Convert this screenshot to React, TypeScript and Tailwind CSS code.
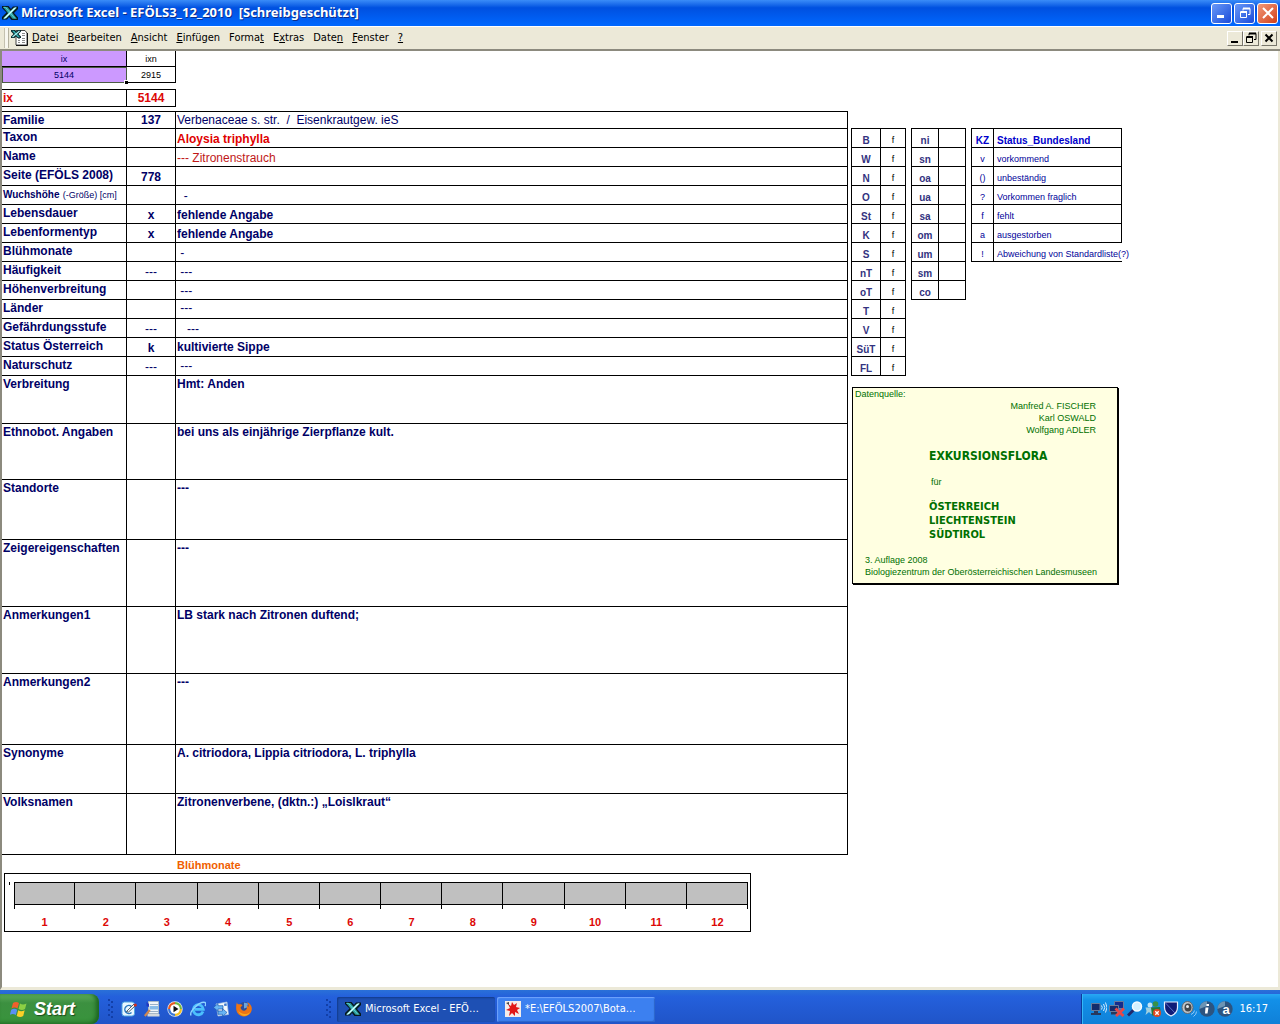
import React from 'react';

interface RecordRow {
  label: React.ReactNode;
  code?: string;
  value?: string;
  height: string;
  valueClass?: string;
}

const MENU = [
  ['', 'D', 'atei'],
  ['', 'B', 'earbeiten'],
  ['', 'A', 'nsicht'],
  ['', 'E', 'infügen'],
  ['Forma', 't', ''],
  ['E', 'x', 'tras'],
  ['Date', 'n', ''],
  ['', 'F', 'enster'],
  ['', '?', ''],
];

const ROWS: RecordRow[] = [
  { label: 'Familie', code: '137', value: 'Verbenaceae s. str.  /  Eisenkrautgew. ieS', height: 'h-[17px]', valueClass: 'align-bottom' },
  { label: 'Taxon', value: 'Aloysia triphylla', height: 'h-[19px]', valueClass: 'align-bottom font-bold text-[#e00000]' },
  { label: 'Name', value: '--- Zitronenstrauch', height: 'h-[19px]', valueClass: 'align-bottom text-[#c01818]' },
  { label: 'Seite (EFÖLS 2008)', code: '778', height: 'h-[19px]' },
  {
    label: (
      <>
        <span className="text-[10px]">Wuchshöhe</span> <span className="text-[9px] font-normal">(-Größe) [cm]</span>
      </>
    ),
    value: '  -',
    height: 'h-[19px]',
    valueClass: 'align-bottom',
  },
  { label: 'Lebensdauer', code: 'x', value: 'fehlende Angabe', height: 'h-[19px]', valueClass: 'align-bottom font-bold' },
  { label: 'Lebenformentyp', code: 'x', value: 'fehlende Angabe', height: 'h-[19px]', valueClass: 'align-bottom font-bold' },
  { label: 'Blühmonate', value: ' -', height: 'h-[19px]', valueClass: 'align-bottom' },
  { label: 'Häufigkeit', code: '---', value: ' ---', height: 'h-[19px]', valueClass: 'align-bottom' },
  { label: 'Höhenverbreitung', value: ' ---', height: 'h-[19px]', valueClass: 'align-bottom' },
  { label: 'Länder', value: ' ---', height: 'h-[19px]', valueClass: 'align-top' },
  { label: 'Gefährdungsstufe', code: '---', value: '   ---', height: 'h-[19px]', valueClass: 'align-bottom' },
  { label: 'Status Österreich', code: 'k', value: 'kultivierte Sippe', height: 'h-[19px]', valueClass: 'align-middle font-bold' },
  { label: 'Naturschutz', code: '---', value: ' ---', height: 'h-[19px]', valueClass: 'align-middle' },
  { label: 'Verbreitung', value: 'Hmt: Anden', height: 'h-[48px]' },
  { label: 'Ethnobot. Angaben', value: 'bei uns als einjährige Zierpflanze kult.', height: 'h-[56px]' },
  { label: 'Standorte', value: '---', height: 'h-[60px]' },
  { label: 'Zeigereigenschaften', value: '---', height: 'h-[67px]' },
  { label: 'Anmerkungen1', value: 'LB stark nach Zitronen duftend;', height: 'h-[67px]' },
  { label: 'Anmerkungen2', value: '---', height: 'h-[71px]' },
  { label: 'Synonyme', value: 'A. citriodora, Lippia citriodora, L. triphylla', height: 'h-[49px]' },
  { label: 'Volksnamen', value: 'Zitronenverbene, (dktn.:) „Loislkraut“', height: 'h-[61px]' },
];

const LAENDER = ['B', 'W', 'N', 'O', 'St', 'K', 'S', 'nT', 'oT', 'T', 'V', 'SüT', 'FL'];
const STUFEN = ['ni', 'sn', 'oa', 'ua', 'sa', 'om', 'um', 'sm', 'co'];
const STATUS = [
  ['v', 'vorkommend'],
  ['()', 'unbeständig'],
  ['?', 'Vorkommen fraglich'],
  ['f', 'fehlt'],
  ['a', 'ausgestorben'],
  ['!', 'Abweichung von Standardliste(?)'],
];
const MONTHS = [1, 2, 3, 4, 5, 6, 7, 8, 9, 10, 11, 12];

const ExcelIcon = () => (
  <svg viewBox="0 0 16 16" className="size-4 shrink-0" aria-hidden="true">
    <path d="M0 1h6.500L9 4l2-2.500h5V4l-4 4 4 4.500V15H9.500L7 12l-2 2.500H0V12l4.500-4.500L0 3z" fill="#06181c" />
    <path d="M1 2h4.500L15 13.800h-4.500z" fill="#2f9c9c" />
    <path d="M1.500 2.300h2L13 13.500" fill="none" stroke="#58d0d0" />
    <path d="M12 2.500h3L4 13.500H1z" fill="#8ce8e8" />
    <path d="M13.500 2.500L2.500 13.500" stroke="#e0ffff" />
  </svg>
);

const SheetIcon = () => (
  <svg viewBox="0 0 18 18" className="size-[18px]" aria-hidden="true">
    <path d="M5 1.500h9l2 2.500v12H5z" fill="#fff" stroke="#444" />
    <path d="M16.500 4v12.500H5" fill="none" stroke="#111" />
    <path d="M11 4.500h3M11 6.500h3M7 9.500h2M11 9.500h3M7 11.500h2M11 11.500h3M7 13.500h2M11 13.500h3" stroke="#8a8a8a" />
    <path d="M0 1h4l1.500 1.500L7 1h3v1.500L7.500 5 10 7.500V9H6.500L5 7.500 3.500 9H0V7.500L2.500 5 0 2.500z" fill="#06282c" />
    <path d="M1 1.800h2L9 8.200H7z" fill="#38b4b4" />
    <path d="M8.500 2l-7 6" stroke="#a8f4f4" strokeWidth="1.200" />
  </svg>
);

const RestoreGlyph = ({ stroke }: { stroke: string }) => (
  <svg viewBox="0 0 12 12" className="size-3" fill="none" stroke={stroke} aria-hidden="true">
    <path d="M4 3.500V1.500h7v6H9" />
    <path d="M4 1.500h7" strokeWidth="2" />
    <path d="M1.500 5h6v5.500h-6z" />
    <path d="M1.500 5h6.500" strokeWidth="2" />
  </svg>
);

function TitleBar() {
  const btn = 'flex size-[21px] items-center justify-center rounded-[3px] border border-white';
  return (
    <header className="flex h-[26px] items-center bg-linear-to-b from-[#3a8cf8] via-[#0050e0] via-30% to-[#0068ff] pr-0.5 pl-0.5">
      <ExcelIcon />
      <h1 className="ml-[3px] flex-1 truncate font-['Noto_Sans','DejaVu_Sans',sans-serif] text-[13px] font-bold whitespace-pre text-white [text-shadow:1px_1px_#0a2c8c]">
        {'Microsoft Excel - EFÖLS3_12_2010  [Schreibgeschützt]'}
      </h1>
      <div className="flex gap-0.5">
        <button aria-label="Minimieren" className={`${btn} bg-linear-to-br from-[#6a98f8] to-[#1c48d8]`}>
          <svg viewBox="0 0 12 12" className="size-3" aria-hidden="true"><path d="M1 8h7v3H1z" fill="#fff" /></svg>
        </button>
        <button aria-label="Wiederherstellen" className={`${btn} bg-linear-to-br from-[#6a98f8] to-[#1c48d8]`}>
          <RestoreGlyph stroke="#fff" />
        </button>
        <button aria-label="Schließen" className={`${btn} bg-linear-to-br from-[#f09878] to-[#d03c10]`}>
          <svg viewBox="0 0 12 12" className="size-3" aria-hidden="true"><path d="M1 1l10 10M11 1L1 11" stroke="#fff" strokeWidth="2" /></svg>
        </button>
      </div>
    </header>
  );
}

function MenuBar() {
  const btn = 'flex h-[15px] w-4 items-center justify-center border border-t-white border-l-white border-r-[#77756a] border-b-[#77756a] bg-[#ece9d8]';
  return (
    <div className="flex h-[25px] items-center border-t border-b-2 border-t-white border-b-[#8c8a7e] bg-[#ece9d8] pr-[3px] pl-1">
      <span className="h-5 w-[5px] border-x border-l-[#c4c1b0] border-r-[#b4b1a0] bg-[#f8f7f0]" />
      <span className="ml-0.5"><SheetIcon /></span>
      <nav className="flex flex-1 items-center gap-[9px] pl-[3px] font-['DejaVu_Sans_Condensed','Noto_Sans',sans-serif] text-[11px] text-black">
        {MENU.map(([pre, key, post]) => (
          <button key={pre + key + post}>
            {pre}<u>{key}</u>{post}
          </button>
        ))}
      </nav>
      <div className="flex">
        <button aria-label="Fenster minimieren" className={btn}>
          <svg viewBox="0 0 12 12" className="size-3" aria-hidden="true"><path d="M2 9h7v2H2z" /></svg>
        </button>
        <button aria-label="Fenster wiederherstellen" className={btn}><RestoreGlyph stroke="#000" /></button>
        <button aria-label="Fenster schließen" className={`${btn} ml-0.5`}>
          <svg viewBox="0 0 12 12" className="size-3" aria-hidden="true"><path d="M2.500 2.500l7 7M9.500 2.500l-7 7" stroke="#000" strokeWidth="2" /></svg>
        </button>
      </div>
    </div>
  );
}

function IndexTables() {
  return (
    <>
      <table className="w-[174px] table-fixed border-separate border-spacing-0 text-center text-[9px] leading-3">
        <tbody>
          <tr className="h-4">
            <td className="w-[125px] border-r border-b border-black bg-[#cc99ff] p-0 text-[#000066]">ix</td>
            <td className="border-r border-b border-black p-0">ixn</td>
          </tr>
          <tr className="h-4">
            <td className="relative border-r border-b border-black bg-[#cc99ff] p-0 text-[#000066] outline-1 -outline-offset-1 outline-[#4c5c44]">
              5144
              <span className="absolute -right-0.5 -bottom-0.5 size-1 border-t border-l border-white bg-black" />
            </td>
            <td className="border-r border-b border-black p-0">2915</td>
          </tr>
        </tbody>
      </table>
      <table className="mt-1.5 w-[174px] table-fixed border-separate border-spacing-0 text-[12px] leading-4 font-bold text-[#dd0806]">
        <tbody>
          <tr className="h-[18px]">
            <td className="w-[125px] border-y border-r border-black p-0 pl-px">ix</td>
            <td className="border-y border-r border-black p-0 text-center">5144</td>
          </tr>
        </tbody>
      </table>
    </>
  );
}

function RecordTable() {
  return (
    <table className="mt-1 w-full table-fixed border-separate border-spacing-0 border-t border-black text-[12px] leading-4 text-[#000066]">
      <colgroup>
        <col className="w-[125px]" />
        <col className="w-[49px]" />
        <col />
      </colgroup>
      <tbody>
        {ROWS.map((row, i) => (
          <tr key={i} className={row.height}>
            <th className="border-r border-b border-black p-0 pl-px text-left align-top font-bold whitespace-nowrap">{row.label}</th>
            <td className={`border-r border-b border-black p-0 text-center align-bottom ${row.code === '---' ? '' : 'font-bold'}`}>{row.code}</td>
            <td className={`border-r border-b border-black p-0 pl-px whitespace-pre ${row.valueClass ?? 'align-top font-bold'}`}>{row.value}</td>
          </tr>
        ))}
      </tbody>
    </table>
  );
}

function MonthChart() {
  return (
    <section className="pt-[3px]">
      <h2 className="pl-[175px] text-[11px] leading-[15px] font-bold text-[#f06000]">Blühmonate</h2>
      <div className="mr-[97px] ml-0.5 flex border border-black pt-2 pr-0.5 pb-0.5">
        <div className="flex w-[9px] shrink-0 justify-center"><span className="h-[3px] w-px bg-black" /></div>
        <div className="grid flex-1 grid-cols-12">
          {MONTHS.map((m) => (
            <div key={m} className="group text-center text-[11px] font-bold text-[#dd0806]">
              <div className="h-[23px] border-y border-r border-black bg-[#c0c0c0] group-first:border-l" />
              <div className="h-1 border-r border-black group-first:border-l" />
              <div className="mt-1.5 leading-[14px]">{m}</div>
            </div>
          ))}
        </div>
      </div>
    </section>
  );
}

function StatusTables() {
  const head = 'border-r border-b border-black p-0 text-center align-bottom font-bold text-[#333380]';
  const cell = 'border-r border-b border-black p-0 text-center align-bottom';
  const table = 'table-fixed border-separate border-spacing-0 border-t border-l border-black text-[10px] leading-[13px]';
  return (
    <div className="flex items-start gap-[5px]">
      <table className={`${table} w-[55px]`}>
        <tbody>
          {LAENDER.map((l) => (
            <tr key={l} className="h-[19px]">
              <th className={`${head} w-[29px]`}>{l}</th>
              <td className={`${cell} text-[9px]`}>f</td>
            </tr>
          ))}
        </tbody>
      </table>
      <table className={`${table} w-[55px]`}>
        <tbody>
          {STUFEN.map((s) => (
            <tr key={s} className="h-[19px]">
              <th className={`${head} w-[27px]`}>{s}</th>
              <td className={cell} />
            </tr>
          ))}
        </tbody>
      </table>
      <table className={`${table} w-[151px] text-[#000099]`}>
        <thead>
          <tr className="h-[19px] text-[#0000cc]">
            <th className={`${cell} w-[22px]`}>KZ</th>
            <th className="border-r border-b border-black p-0 pl-[3px] text-left align-bottom">Status_Bundesland</th>
          </tr>
        </thead>
        <tbody className="text-[9px]">
          {STATUS.map(([k, text]) => (
            <tr key={k} className="h-[19px]">
              <td className={cell}>{k}</td>
              <td className={`border-b border-black p-0 pl-[3px] align-bottom whitespace-nowrap ${k === '!' ? '' : 'border-r'}`}>{text}</td>
            </tr>
          ))}
        </tbody>
      </table>
    </div>
  );
}

function SourceNote() {
  return (
    <div className="mt-[11px] ml-px w-[266px] border border-black bg-[#ffffe1] pb-[5px] text-[9px] leading-3 text-[#007000] shadow-[1px_1px_#000]">
      <p className="pl-0.5">Datenquelle:</p>
      <p className="pr-[21px] text-right">
        Manfred A. FISCHER<br />Karl OSWALD<br />Wolfgang ADLER
      </p>
      <div className="pl-[76px] font-['DejaVu_Sans_Condensed','Noto_Sans',sans-serif] font-bold">
        <p className="mt-3 text-[12px] leading-4">EXKURSIONSFLORA</p>
        <p className="mt-3 pl-0.5 font-['Liberation_Sans',Arial,sans-serif] font-normal">für</p>
        <p className="mt-3 text-[11px] leading-[14px]">
          ÖSTERREICH<br />LIECHTENSTEIN<br />SÜDTIROL
        </p>
      </div>
      <p className="mt-3 pl-3">
        3. Auflage 2008<br />Biologiezentrum der Oberösterreichischen Landesmuseen
      </p>
    </div>
  );
}

const WindowsFlag = () => (
  <svg viewBox="0 0 18 18" className="size-[18px]" aria-hidden="true">
    <path d="M3 3c2-1.500 4-1.500 6 0L7.500 8.500c-2-1.300-4-1.300-6 0z" fill="#f0602c" />
    <path d="M10 3.500c2 1.300 4 1.300 6.500 0L15 9c-2 1.300-4 1.300-6.500 0z" fill="#8cd044" />
    <path d="M1.200 9.700c2-1.300 4-1.300 6 0L5.800 15c-2-1.300-4-1.300-6 0z" fill="#5a90f4" />
    <path d="M8.200 10.200c2 1.300 4 1.300 6.500 0L13.200 16c-2 1.300-4 1.300-6.500 0z" fill="#fcd028" />
  </svg>
);

const Grip = () => (
  <svg viewBox="0 0 6 20" className="h-5 w-1.5" fill="#123fa8" aria-hidden="true">
    <path d="M0 0h2v2H0zM3 2h2v2H3zM0 5h2v2H0zM3 7h2v2H3zM0 10h2v2H0zM3 12h2v2H3zM0 15h2v2H0zM3 17h2v2H3z" />
  </svg>
);

const QUICK: [string, React.ReactNode][] = [
  ['Desktop anzeigen', (
    <>
      <rect x="1" y="1" width="12.500" height="14" rx="2.500" fill="#e8f6ff" stroke="#50a4e0" />
      <path d="M10.500 5.500a4 4 0 1 0 0 6" fill="none" stroke="#2a78c0" strokeWidth="1.500" />
      <path d="M5.500 10.500L13 3l1.500 1.500L7.500 11z" fill="#fff" stroke="#234" strokeWidth=".8" />
      <circle cx="14.300" cy="4" r="1.600" fill="#d03020" />
    </>
  )],
  ['Suchen', (
    <>
      <path d="M4.500.5h10v12h-10z" fill="#f0f4f8" stroke="#a8b8c8" />
      <path d="M6 3.500h8M6 10.500h8" stroke="#9ab0c8" />
      <path d="M5.500 5h8.500v3.500H5.500z" fill="#88bce8" />
      <path d="M2.500 1l2.500 2v3L2.500 5z" fill="#2038c0" />
      <path d="M3.500 13h12v2.500h-12z" fill="#d4d8dc" />
      <path d="M.8 15l5-6" stroke="#d08850" strokeWidth="2.200" />
    </>
  )],
  ['Media Player', (
    <>
      <circle cx="8" cy="8" r="7.700" fill="#e8ecf0" />
      <path d="M8 1a7 7 0 0 0-7 7h3a4 4 0 0 1 4-4z" fill="#e85820" />
      <path d="M8 1a7 7 0 0 1 7 7h-3a4 4 0 0 0-4-4z" fill="#70b840" />
      <path d="M15 8a7 7 0 0 1-7 7v-3a4 4 0 0 0 4-4z" fill="#f4c020" />
      <path d="M1 8a7 7 0 0 0 7 7v-3a4 4 0 0 1-4-4z" fill="#3878d8" />
      <circle cx="8" cy="8" r="4.800" fill="#fff" />
      <path d="M6.500 4.800l5 3.200-5 3.200z" fill="#111" />
    </>
  )],
  ['Internet Explorer', (
    <>
      <path d="M13 10.500A5 5 0 1 1 13.300 8.300H5" fill="none" stroke="#4cc0fc" strokeWidth="2.800" />
      <path d="M1 14.500C-1 10 10 0 15 1.500c1 .5 1 2 0 3.500" fill="none" stroke="#8cd4ff" strokeWidth="1.400" />
    </>
  )],
  ['E-Mail', (
    <>
      <path d="M3 3l11-2 1.500 12.500L5 15z" fill="#f4f8fc" stroke="#a8c4e0" strokeWidth=".7" />
      <path d="M11 2.800l2.500-.5.300 2.500-2.500.3z" fill="#3c78d0" />
      <path d="M.5 6.500L5 2.500v2.200h5v3.300H5v2.300zM14 11.500l-4.500 4v-2.200H5v-3.300h4.500V7.700z" fill="#68b4f4" stroke="#1c5cb0" strokeWidth=".7" />
    </>
  )],
  ['Firefox', (
    <>
      <circle cx="8.500" cy="7.500" r="6.500" fill="#2c4c98" />
      <path d="M8 1.500l4 1-1 4-3 1z" fill="#6ca4dc" />
      <path d="M1 1c0 1.500.5 2.300 2 2.300 1.500-.5 3 .2 3.500 1L4.500 6.500C5 9 7 10.300 9 9.500c2-1 2.500-3 1.500-5 1 .3 1.500.8 2 1.500.3-2-.3-3.500-1.500-5C16 3 17 8.500 14.500 12c-3.300 4.500-10 4.500-13 0C-.5 9 0 4 1 1z" fill="#ee7414" />
      <path d="M2 9.500c3 4 9 5 12.500 1-2 5.500-10 6.500-12.500-1z" fill="#f8a820" />
    </>
  )],
];

const TRAY: [string, React.ReactNode][] = [
  ['Drahtlose Verbindung', (
    <>
      <path d="M.5 2.500h8.500v7H.5z" fill="#142c6c" stroke="#687c9c" />
      <path d="M3 10h4v2H3zM0 12h10v2H0z" fill="#28385c" />
      <path d="M10.500 4.500q1.500 2 0 4M12.500 3q2.500 3.500 0 7M14.500 1.500q3 5 0 10" fill="none" stroke="#d8ecff" />
    </>
  )],
  ['Netzwerk getrennt', (
    <>
      <path d="M5.500.5h9v7h-9z" fill="#142c8c" stroke="#687c9c" />
      <path d="M.500 4.500h9v6h-9z" fill="#142c6c" stroke="#687c9c" />
      <path d="M2 11h6v2.500H2z" fill="#28385c" />
      <path d="M6.500 7.500l8 7.500M15 7.500L7 15" stroke="#e84848" strokeWidth="2.800" />
    </>
  )],
  ['Lupe', (
    <>
      <path d="M1 14.500l6-6" stroke="#20286c" strokeWidth="2.800" />
      <circle cx="10" cy="5.500" r="4.500" fill="#d4f0ff" stroke="#f4fbff" strokeWidth="1.500" />
    </>
  )],
  ['Messenger', (
    <>
      <circle cx="5" cy="4" r="2.500" fill="#c4e4f4" />
      <path d="M.5 6.500h6l3 6.500H6l-2-2-3.500 3 1-4z" fill="#a0d0e0" />
      <circle cx="10.500" cy="3" r="2.800" fill="#389048" />
      <path d="M6 6.500l9-.5.500 3.500-4 1-1 4H7z" fill="#287838" />
      <circle cx="12" cy="12" r="4" fill="#e04820" />
      <path d="M10.300 10.300l3.400 3.400M13.700 10.300l-3.400 3.400" stroke="#fff" strokeWidth="1.300" />
    </>
  )],
  ['Sicherheit', (
    <>
      <path d="M1.500 1h13v5.500c0 4-3 7-6.500 8.500-3.500-1.500-6.500-4.500-6.500-8.500z" fill="#101c78" stroke="#e8f0ff" strokeWidth="1.200" />
      <path d="M2.500 2l9.500 10" stroke="#5870c8" />
    </>
  )],
  ['Lautstärke', (
    <>
      <ellipse cx="6.500" cy="6.500" rx="5.500" ry="6" fill="#c0c4c8" stroke="#64686c" />
      <ellipse cx="7" cy="6.500" rx="3.500" ry="4" fill="#44484c" />
      <circle cx="6.500" cy="5.500" r="1.500" fill="#e8ecf0" />
      <path d="M10 13.500q3-1 3.500-4M12.500 15.500q3-2 3-5" fill="none" stroke="#90c8f8" />
    </>
  )],
  ['Info', (
    <>
      <circle cx="8" cy="8" r="7.700" fill="#2c5480" />
      <path d="M8 .3A7.700 7.700 0 0 0 .3 8L8 5z" fill="#6c94b4" />
      <path d="M7.500 3H10v2H7.500zM6.500 6.500h3l-1 6H6z" fill="#fff" />
    </>
  )],
  ['Virenschutz', (
    <>
      <circle cx="8" cy="8" r="7.700" fill="#2c5480" />
      <path d="M8 .3A7.700 7.700 0 0 0 .3 8L8 5z" fill="#6c94b4" />
      <text x="9" y="12.500" textAnchor="middle" fontSize="13" fontWeight="bold" fontFamily="Liberation Sans, sans-serif" fill="#fff">a</text>
    </>
  )],
];

function Taskbar() {
  const task = "flex h-[25px] w-[158px] items-center gap-1 rounded-[2px] pl-2 text-left font-['DejaVu_Sans_Condensed','Noto_Sans',sans-serif] text-[11px] text-white";
  return (
    <footer className="flex h-[34px] items-end bg-linear-to-b from-[#2a70d8] via-[#2460dc] via-20% to-[#2054c8]">
      <button className="flex h-[30px] w-[99px] items-center gap-1.5 rounded-r-[8px] bg-linear-to-b from-[#5cac5c] via-[#3c9040] via-30% to-[#38943c] pl-2.5 font-['Liberation_Sans',Arial,sans-serif] text-[18px] font-bold text-white italic shadow-[inset_-3px_-1px_4px_#1c6420] [text-shadow:1px_1px_1px_#1c4c1c]">
        <WindowsFlag />
        Start
      </button>
      <div className="flex h-[30px] flex-1 items-center">
        <div className="flex w-[238px] items-center pr-[5px] pl-[9px]">
          <Grip />
          <div className="ml-[7px] flex flex-1 items-center gap-[7px]">
            {QUICK.map(([name, art]) => (
              <button key={name} aria-label={name}>
                <svg viewBox="0 0 16 16" className="size-4" aria-hidden="true">{art}</svg>
              </button>
            ))}
          </div>
          <Grip />
        </div>
        <div className="flex gap-0.5">
          <button className={`${task} bg-[#1e50b4] shadow-[inset_1px_1px_2px_#123a88]`}>
            <ExcelIcon />
            Microsoft Excel - EFÖ…
          </button>
          <button className={`${task} bg-[#3c80f0] shadow-[inset_1px_1px_1px_#70a4fc,inset_-1px_-1px_1px_#2c64c8]`}>
            <svg viewBox="0 0 16 16" className="size-4 shrink-0" aria-hidden="true">
              <path d="M0 0h16v16H0z" fill="#f4ecea" />
              <path d="M7 1l2 3 3-2-1 4 4 1-3 2 2 4-4-2v4l-3-3-3 3 1-5-4-1 4-2-2-4 3 2z" fill="#e01818" />
              <path d="M1 2l3-1v3z" fill="#444" />
            </svg>
            *E:\EFÖLS2007\Bota…
          </button>
        </div>
      </div>
      <div className="flex h-[30px] items-center gap-0.5 border-l border-[#0c3c9c] bg-linear-to-b from-[#28a8f4] via-[#1290e8] via-20% to-[#1080d8] pr-3 pl-[9px] shadow-[inset_1px_0_#34b8f8]">
        {TRAY.map(([name, art]) => (
          <button key={name} aria-label={name}>
            <svg viewBox="0 0 16 16" className="size-4" aria-hidden="true">{art}</svg>
          </button>
        ))}
        <time className="ml-1 font-['DejaVu_Sans_Condensed','Noto_Sans',sans-serif] text-[11px] text-white">16:17</time>
      </div>
    </footer>
  );
}

export default function App() {
  return (
    <div className="flex min-h-screen flex-col bg-white font-['Liberation_Sans',Arial,sans-serif] text-black">
      <TitleBar />
      <MenuBar />
      <main className="flex flex-1 items-stretch border-r-2 border-b-3 border-l-2 border-r-[#ece9d8] border-b-[#ece9d8] border-l-[#8c8a7e]">
        <div className="min-w-0 flex-1">
          <IndexTables />
          <RecordTable />
          <MonthChart />
        </div>
        <aside className="w-[430px] shrink-0 pt-[77px] pl-[3px]">
          <StatusTables />
          <SourceNote />
        </aside>
      </main>
      <Taskbar />
    </div>
  );
}
